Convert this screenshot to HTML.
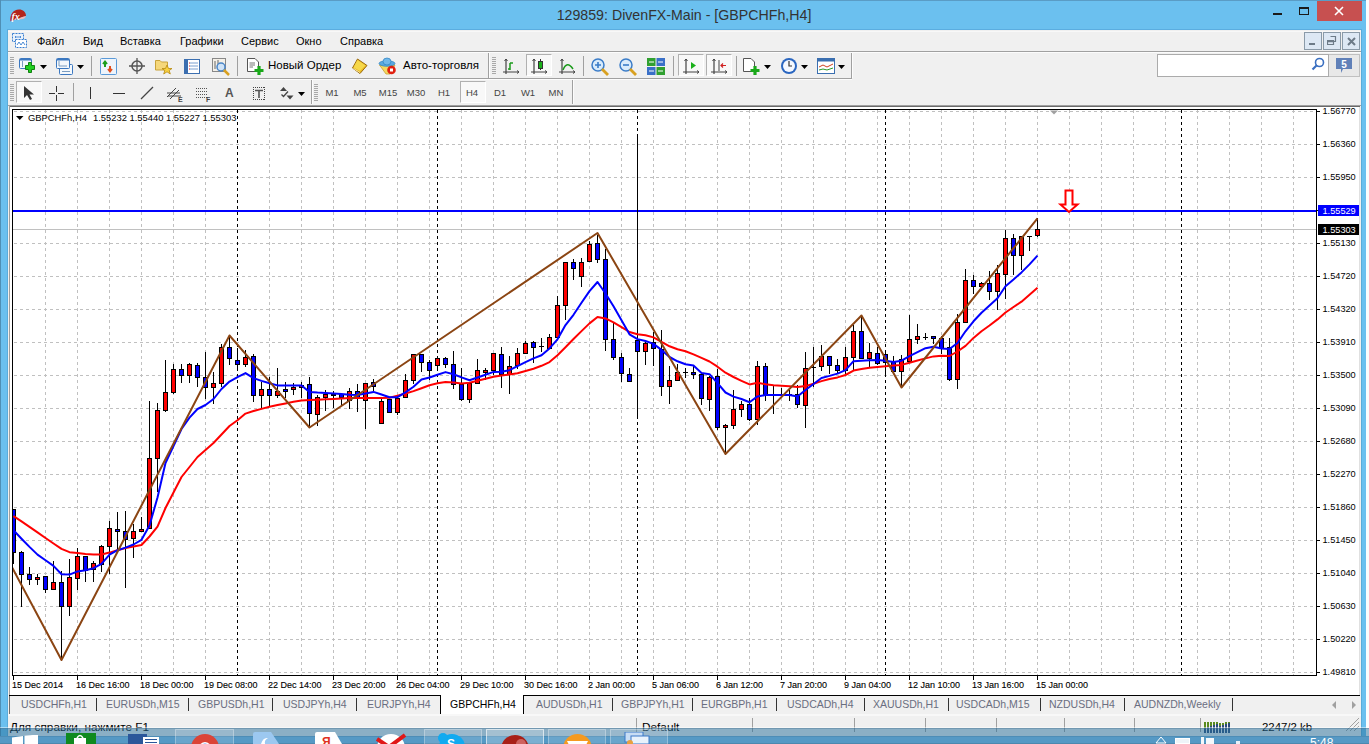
<!DOCTYPE html>
<html><head><meta charset="utf-8">
<style>
*{margin:0;padding:0;box-sizing:border-box}
html,body{width:1369px;height:744px;overflow:hidden;background:#fdfdfd;font-family:"Liberation Sans",sans-serif}
.abs{position:absolute}
.r{position:absolute}
.t{position:absolute;white-space:nowrap;line-height:1}
</style></head><body>
<!-- window frame -->
<div class="r" style="left:0;top:0;width:1366px;height:744px;background:#6bc0ef"></div>
<div class="r" style="left:0;top:0;width:1366px;height:1px;background:#5a9cc5"></div>
<div class="r" style="left:0;top:0;width:1px;height:744px;background:#4f8fb5"></div>
<div class="r" style="left:7px;top:29px;width:1355px;height:1px;background:#5badE0"></div>
<div class="r" style="left:7px;top:30px;width:1px;height:714px;background:#5aacdb"></div>
<div class="r" style="left:1361px;top:30px;width:1px;height:714px;background:#5aacdb"></div>
<!-- title -->
<svg class="abs" style="left:9px;top:8px" width="18" height="15" viewBox="0 0 18 15">
<path d="M1.5 13.5 C0.5 7 4 1.5 10 1.5 C14 1.5 17 4 17 8 C15 8.5 12 9 9.5 11 C6.5 11.5 3.5 12.5 1.5 13.5Z" fill="#b3241c"/>
<path d="M9.5 11 C12 9 15 8.5 17 8 C16.5 10.5 13 12 9.5 11Z" fill="#f2b8b8"/>
<text x="2.5" y="11.5" font-family="Liberation Serif" font-style="italic" font-weight="bold" font-size="10" fill="#fff">fx</text>
</svg>
<div class="t" style="left:484px;top:8px;width:400px;text-align:center;font-size:14.2px;color:#333">129859: DivenFX-Main - [GBPCHFh,H4]</div>
<div class="r" style="left:1273px;top:13px;width:9px;height:2px;background:#1a1a1a"></div>
<div class="r" style="left:1299px;top:7px;width:10px;height:8px;border:1px solid #1a1a1a;border-top-width:2px"></div>
<div class="r" style="left:1317px;top:1px;width:45px;height:20px;background:#c75050"></div>
<svg class="abs" style="left:1334px;top:6px" width="10" height="10"><path d="M1 1L9 9M9 1L1 9" stroke="#fff" stroke-width="1.6"/></svg>
<!-- client -->
<div class="r" style="left:8px;top:30px;width:1353px;height:714px;background:#f0f0f0"></div>
<div class="r" style="left:8px;top:31px;width:1353px;height:1px;background:#f8f8f8"></div>
<!-- menu bar -->
<svg class="abs" style="left:12px;top:33px" width="16" height="15" viewBox="0 0 16 15">
<rect x="0.5" y="0.5" width="11" height="8" fill="#eaf2fb" stroke="#3a7fd0" stroke-dasharray="2,1"/>
<path d="M3 4H9M4 3L3 4L4 5M8 3L9 4L8 5" stroke="#3a7fd0" fill="none" stroke-width="0.8"/>
<rect x="3.5" y="6.5" width="11" height="8" fill="#fff" stroke="#3a7fd0" stroke-dasharray="2,1"/>
<path d="M5 12l2-3 2 3 2-3 2 3" stroke="#3a7fd0" fill="none" stroke-width="0.9"/>
</svg>
<div class="t" style="left:37px;top:36px;font-size:11px;color:#000">Файл</div>
<div class="t" style="left:83px;top:36px;font-size:11px;color:#000">Вид</div>
<div class="t" style="left:120px;top:36px;font-size:11px;color:#000">Вставка</div>
<div class="t" style="left:180px;top:36px;font-size:11px;color:#000">Графики</div>
<div class="t" style="left:241px;top:36px;font-size:11px;color:#000">Сервис</div>
<div class="t" style="left:296px;top:36px;font-size:11px;color:#000">Окно</div>
<div class="t" style="left:340px;top:36px;font-size:11px;color:#000">Справка</div>
<!-- MDI buttons -->
<div class="r" style="left:1304px;top:32px;width:18px;height:18px;background:#dde8f4;border:1px solid #8a9aa8"></div>
<div class="r" style="left:1323px;top:32px;width:18px;height:18px;background:#dde8f4;border:1px solid #8a9aa8"></div>
<div class="r" style="left:1342px;top:32px;width:18px;height:18px;background:#dde8f4;border:1px solid #8a9aa8"></div>
<div class="r" style="left:1309px;top:43px;width:6px;height:2px;background:#6d7b88"></div>
<svg class="abs" style="left:1327px;top:36px" width="10" height="10"><path d="M3.5 0.5H8.5V5.5H7M0.5 4.5H6.5V8.5H0.5Z" fill="none" stroke="#6d7b88" stroke-width="1.2"/><path d="M0.5 5.5H6.5" stroke="#6d7b88" stroke-width="1.5"/></svg>
<svg class="abs" style="left:1347px;top:37px" width="9" height="9"><path d="M1 1L8 8M8 1L1 8" stroke="#6d7b88" stroke-width="2"/></svg>
<div class="r" style="left:8px;top:51px;width:1353px;height:1px;background:#a0a0a0"></div>
<div class="r" style="left:8px;top:52px;width:1353px;height:1px;background:#fcfcfc"></div>
<div class="r" style="left:8px;top:78px;width:844px;height:1px;background:#a0a0a0"></div><div class="r" style="left:8px;top:79px;width:844px;height:1px;background:#fcfcfc"></div><div class="r" style="left:488px;top:53px;width:1px;height:25px;background:#a0a0a0"></div><div class="r" style="left:489px;top:53px;width:1px;height:25px;background:#fcfcfc"></div><div class="r" style="left:851px;top:53px;width:1px;height:25px;background:#a0a0a0"></div><div class="r" style="left:852px;top:53px;width:1px;height:25px;background:#fcfcfc"></div><div class="r" style="left:311px;top:80px;width:1px;height:24px;background:#a0a0a0"></div><div class="r" style="left:312px;top:80px;width:1px;height:24px;background:#fcfcfc"></div><div class="r" style="left:572px;top:80px;width:1px;height:24px;background:#a0a0a0"></div><div class="r" style="left:573px;top:80px;width:1px;height:24px;background:#fcfcfc"></div><svg class="abs" style="left:10px;top:56px" width="4" height="20"><path d="M0 1.5H4M0 3.5H4M0 5.5H4M0 7.5H4M0 9.5H4M0 11.5H4M0 13.5H4M0 15.5H4M0 17.5H4" stroke="#a8a8a8" stroke-width="1"/></svg><svg class="abs" style="left:492px;top:56px" width="4" height="20"><path d="M0 1.5H4M0 3.5H4M0 5.5H4M0 7.5H4M0 9.5H4M0 11.5H4M0 13.5H4M0 15.5H4M0 17.5H4" stroke="#a8a8a8" stroke-width="1"/></svg><svg class="abs" style="left:10px;top:83px" width="4" height="20"><path d="M0 1.5H4M0 3.5H4M0 5.5H4M0 7.5H4M0 9.5H4M0 11.5H4M0 13.5H4M0 15.5H4M0 17.5H4" stroke="#a8a8a8" stroke-width="1"/></svg><svg class="abs" style="left:314px;top:83px" width="4" height="20"><path d="M0 1.5H4M0 3.5H4M0 5.5H4M0 7.5H4M0 9.5H4M0 11.5H4M0 13.5H4M0 15.5H4M0 17.5H4" stroke="#a8a8a8" stroke-width="1"/></svg><div class="r" style="left:91px;top:56px;width:1px;height:20px;background:#a0a0a0"></div><div class="r" style="left:237px;top:56px;width:1px;height:20px;background:#a0a0a0"></div><div class="r" style="left:583px;top:56px;width:1px;height:20px;background:#a0a0a0"></div><div class="r" style="left:673px;top:56px;width:1px;height:20px;background:#a0a0a0"></div><div class="r" style="left:736px;top:56px;width:1px;height:20px;background:#a0a0a0"></div><div class="r" style="left:73px;top:83px;width:1px;height:18px;background:#a0a0a0"></div><div class="r" style="left:526px;top:54px;width:26px;height:22px;background:#f8f8f8;border-left:1px solid #b0b0b0;border-top:1px solid #b0b0b0;border-right:1px solid #fff;border-bottom:1px solid #fff"></div><div class="r" style="left:678px;top:54px;width:26px;height:22px;background:#f8f8f8;border-left:1px solid #b0b0b0;border-top:1px solid #b0b0b0;border-right:1px solid #fff;border-bottom:1px solid #fff"></div><div class="r" style="left:706px;top:54px;width:26px;height:22px;background:#f8f8f8;border-left:1px solid #b0b0b0;border-top:1px solid #b0b0b0;border-right:1px solid #fff;border-bottom:1px solid #fff"></div><div class="r" style="left:16px;top:81px;width:26px;height:22px;background:#f8f8f8;border-left:1px solid #b0b0b0;border-top:1px solid #b0b0b0;border-right:1px solid #fff;border-bottom:1px solid #fff"></div><div class="r" style="left:460px;top:81px;width:26px;height:22px;background:#f8f8f8;border-left:1px solid #b0b0b0;border-top:1px solid #b0b0b0;border-right:1px solid #fff;border-bottom:1px solid #fff"></div><div class="t" style="left:268px;top:60px;font-size:11.5px;color:#000;">Новый Ордер</div><div class="t" style="left:403px;top:60px;font-size:11.5px;color:#000;">Авто-торговля</div><svg class="abs" style="left:19px;top:57px" width="18" height="18"><rect x="0.5" y="1.5" width="12" height="10" rx="1" fill="#f4f8fc" stroke="#3c78c0"/><rect x="1" y="2" width="11" height="1.5" fill="#3c78c0"/><path d="M3.5 4V10" stroke="#7a9cc0"/><path d="M9.5 5.5H12.5V8.5H15.5V12.5H12.5V15.5H9.5V12.5H6.5V8.5H9.5Z" fill="#20d020" stroke="#108010" stroke-width="1"/></svg><svg class="abs" style="left:40px;top:65px" width="7" height="4"><path d="M0 0H7L3.5 4Z" fill="#000"/></svg><svg class="abs" style="left:56px;top:57px" width="18" height="18"><rect x="3.5" y="7.5" width="13" height="10" rx="1" fill="#f4f8fc" stroke="#3c78c0"/><rect x="0.5" y="1.5" width="13" height="10" rx="1" fill="#f4f8fc" stroke="#3c78c0"/><rect x="1" y="2" width="12" height="1.5" fill="#3c78c0"/><path d="M3 4V9M3 9H11M6 14.5H14" stroke="#7a9cc0"/></svg><svg class="abs" style="left:77px;top:65px" width="7" height="4"><path d="M0 0H7L3.5 4Z" fill="#000"/></svg><svg class="abs" style="left:100px;top:58px" width="17" height="17"><rect x="0.5" y="0.5" width="16" height="16" rx="1" fill="#eef4fb" stroke="#5b9ad8"/><path d="M5 9V4M3 6L5 3.5L7 6" stroke="#1c9e1c" stroke-width="2" fill="none"/><path d="M10 8V13M8 11L10 13.5L12 11" stroke="#e05020" stroke-width="2" fill="none"/></svg><svg class="abs" style="left:129px;top:58px" width="16" height="16"><circle cx="8" cy="8" r="5" fill="none" stroke="#555" stroke-width="1.5"/><path d="M8 0V16M0 8H16" stroke="#555" stroke-width="1.3"/></svg><svg class="abs" style="left:155px;top:58px" width="18" height="18"><path d="M0.5 2.5H5L6.5 4H12.5V12H0.5Z" fill="#f5d77a" stroke="#c9a33a"/><path d="M12 7L13.5 10.5H17L14.2 12.5L15.3 16L12 13.8L8.7 16L9.8 12.5L7 10.5H10.5Z" fill="#f8d040" stroke="#b88a10" stroke-width="0.8"/></svg><svg class="abs" style="left:184px;top:58px" width="17" height="17"><rect x="0.5" y="1.5" width="15" height="14" fill="#fff" stroke="#3c6fb0"/><rect x="1" y="2" width="3" height="13" fill="#3c6fb0"/><path d="M6 5H14M6 8H14M6 11H14" stroke="#7aa0d0"/><path d="M5 5H6M5 8H6M5 11H6" stroke="#d02020"/></svg><svg class="abs" style="left:212px;top:58px" width="18" height="18"><rect x="0.5" y="0.5" width="13" height="13" fill="#f4f0e8" stroke="#888"/><path d="M3 3V11M6 2V9" stroke="#666"/><circle cx="9" cy="9" r="4" fill="#cfe3f7" stroke="#4a86c8" stroke-width="1.5"/><path d="M12 12L17 17" stroke="#d8a020" stroke-width="2.5"/></svg><svg class="abs" style="left:247px;top:58px" width="18" height="18"><path d="M0.5 0.5H8L11.5 4V13.5H0.5Z" fill="#fff" stroke="#555"/><path d="M2.5 5H8M2.5 7H8M2.5 9H6" stroke="#777"/><path d="M12 8V17M7.5 12.5H16.5" stroke="#19a819" stroke-width="3.2"/></svg><svg class="abs" style="left:351px;top:58px" width="18" height="17"><path d="M6.5 1L16 7.5L9 15.5L1.5 10Z" fill="#e9b820" stroke="#9a6a10" stroke-width="1"/><path d="M6.5 2L14.5 7.5L9 13L2.5 9.5Z" fill="#f6d84a"/><path d="M2.5 10.5L9 14.5" stroke="#f8e8a0" stroke-width="1"/></svg><svg class="abs" style="left:378px;top:57px" width="19" height="19"><path d="M1.5 8L17 8L12 17H8Z" fill="#f4d860" stroke="#c8a030" stroke-width="0.8"/><ellipse cx="9" cy="6.5" rx="8" ry="2.8" fill="#58a8e0" stroke="#2a80c0" stroke-width="0.7"/><ellipse cx="9" cy="4.5" rx="4" ry="3.5" fill="#70b8ea" stroke="#2a80c0" stroke-width="0.7"/><circle cx="13.5" cy="13" r="4.3" fill="#e02010"/><rect x="12" y="11.5" width="3" height="3" fill="#fff"/></svg><svg class="abs" style="left:502px;top:58px" width="18" height="17"><path d="M4 1V16M1 14H17" stroke="#444" stroke-width="1.2"/><path d="M2.5 3L4 1L5.5 3M15 12.5L17 14L15 15.5" stroke="#444" fill="none"/><path d="M8 12V5M8 5H11M8 11H6" stroke="#1a9a1a" stroke-width="1.5" fill="none"/></svg><svg class="abs" style="left:530px;top:58px" width="18" height="17"><path d="M4 1V16M1 14H17" stroke="#444" stroke-width="1.2"/><path d="M2.5 3L4 1L5.5 3M15 12.5L17 14L15 15.5" stroke="#444" fill="none"/><rect x="8.5" y="3.5" width="4" height="7" fill="#1ab01a" stroke="#333"/><path d="M10.5 1V3.5M10.5 10.5V12" stroke="#333"/></svg><svg class="abs" style="left:558px;top:58px" width="18" height="17"><path d="M4 1V16M1 14H17" stroke="#444" stroke-width="1.2"/><path d="M2.5 3L4 1L5.5 3M15 12.5L17 14L15 15.5" stroke="#444" fill="none"/><path d="M5 12Q9 2 15 11" stroke="#1a9a1a" stroke-width="1.5" fill="none"/></svg><svg class="abs" style="left:591px;top:58px" width="18" height="18"><circle cx="7" cy="7" r="6" fill="#d8ebfb" stroke="#3a7cc8" stroke-width="1.5"/><path d="M4 7H10M7 4V10" stroke="#3a7cc8" stroke-width="1.6"/><path d="M11 11L17 17" stroke="#d8a020" stroke-width="2.8"/></svg><svg class="abs" style="left:619px;top:58px" width="18" height="18"><circle cx="7" cy="7" r="6" fill="#d8ebfb" stroke="#3a7cc8" stroke-width="1.5"/><path d="M4 7H10" stroke="#3a7cc8" stroke-width="1.6"/><path d="M11 11L17 17" stroke="#d8a020" stroke-width="2.8"/></svg><svg class="abs" style="left:647px;top:58px" width="18" height="17"><rect x="0" y="0" width="8.5" height="8" fill="#30a030"/><rect x="9.5" y="0" width="8.5" height="8" fill="#3a70c8"/><rect x="0" y="9" width="8.5" height="8" fill="#3a70c8"/><rect x="9.5" y="9" width="8.5" height="8" fill="#30a030"/><path d="M2 4H7M11 4H16M2 13H7M11 13H16" stroke="#fff"/></svg><svg class="abs" style="left:682px;top:58px" width="18" height="17"><path d="M4 1V16M1 14H17" stroke="#444" stroke-width="1.2"/><path d="M2.5 3L4 1L5.5 3M15 12.5L17 14L15 15.5" stroke="#444" fill="none"/><path d="M9 4V11L14 7.5Z" fill="#1ab01a"/></svg><svg class="abs" style="left:710px;top:58px" width="18" height="17"><path d="M4 1V16M1 14H17" stroke="#444" stroke-width="1.2"/><path d="M2.5 3L4 1L5.5 3M15 12.5L17 14L15 15.5" stroke="#444" fill="none"/><path d="M9 2V13" stroke="#444"/><path d="M16 7.5H11M13 5.5L11 7.5L13 9.5" stroke="#d02020" fill="none" stroke-width="1.2"/></svg><svg class="abs" style="left:743px;top:58px" width="18" height="18"><path d="M0.5 0.5H8L11.5 4V13.5H0.5Z" fill="#fff" stroke="#555"/><path d="M12 8V17M7.5 12.5H16.5" stroke="#19a819" stroke-width="3.2"/></svg><svg class="abs" style="left:764px;top:65px" width="7" height="4"><path d="M0 0H7L3.5 4Z" fill="#000"/></svg><svg class="abs" style="left:780px;top:57px" width="18" height="18"><circle cx="9" cy="9" r="8" fill="#2a66c0"/><circle cx="9" cy="9" r="6" fill="#f4f8ff"/><path d="M9 4V9H12" stroke="#333" stroke-width="1.2" fill="none"/></svg><svg class="abs" style="left:801px;top:65px" width="7" height="4"><path d="M0 0H7L3.5 4Z" fill="#000"/></svg><svg class="abs" style="left:817px;top:58px" width="18" height="16"><rect x="0.5" y="0.5" width="17" height="15" fill="#fff" stroke="#3a6fb0"/><rect x="0.5" y="0.5" width="17" height="3" fill="#3a6fb0"/><path d="M2 9L6 7L10 9L16 6" stroke="#d04020" fill="none"/><path d="M2 12L6 11L10 12L16 10" stroke="#2a9a2a" fill="none"/></svg><svg class="abs" style="left:838px;top:65px" width="7" height="4"><path d="M0 0H7L3.5 4Z" fill="#000"/></svg><svg class="abs" style="left:23px;top:85px" width="12" height="16"><path d="M1 1L1 13L4 10L7 15L9 14L6.5 9.5H11Z" fill="#333"/></svg><svg class="abs" style="left:48px;top:85px" width="16" height="16"><path d="M8.5 1V7M8.5 10V16M1 8.5H7M10 8.5H16" stroke="#333"/></svg><div class="r" style="left:90px;top:87px;width:1px;height:12px;background:#333"></div><div class="r" style="left:113px;top:93px;width:12px;height:1px;background:#333"></div><svg class="abs" style="left:140px;top:86px" width="14" height="14"><path d="M1 13L13 1" stroke="#444" stroke-width="1.2"/></svg><svg class="abs" style="left:166px;top:85px" width="18" height="18"><path d="M1 12L10 3M4 14L13 5M1 8H14M2 11H15" stroke="#444" stroke-width="1"/><text x="12" y="17" font-size="7" font-weight="bold" fill="#444">E</text></svg><svg class="abs" style="left:195px;top:85px" width="18" height="18"><path d="M1 3.5H13M1 6.5H13M1 9.5H13M1 12.5H13" stroke="#555" stroke-dasharray="1,1"/><text x="11" y="17" font-size="7" font-weight="bold" fill="#444">F</text></svg><div class="t" style="left:225px;top:87px;font-size:12px;font-weight:bold;color:#555">A</div><svg class="abs" style="left:252px;top:86px" width="14" height="15"><path d="M1 1.5H13M1 13.5H13M1.5 1V14M12.5 1V14" stroke="#444" stroke-width="1" stroke-dasharray="1,1"/><path d="M3 4.5H11M7 4.5V12" stroke="#555" stroke-width="1.6"/></svg><svg class="abs" style="left:279px;top:86px" width="16" height="15"><path d="M1 5L4.5 1L8 5Z" fill="#444"/><path d="M2.5 8.5L4.5 10.5L9 5.5" stroke="#444" stroke-width="1.3" fill="none"/><path d="M7.5 9.5H14.5L11 13.5Z" fill="#444"/></svg><svg class="abs" style="left:298px;top:92px" width="7" height="4"><path d="M0 0H7L3.5 4Z" fill="#000"/></svg><div class="t" style="left:312px;top:88px;width:40px;text-align:center;font-size:9.5px;color:#444">M1</div><div class="t" style="left:340px;top:88px;width:40px;text-align:center;font-size:9.5px;color:#444">M5</div><div class="t" style="left:368px;top:88px;width:40px;text-align:center;font-size:9.5px;color:#444">M15</div><div class="t" style="left:396px;top:88px;width:40px;text-align:center;font-size:9.5px;color:#444">M30</div><div class="t" style="left:424px;top:88px;width:40px;text-align:center;font-size:9.5px;color:#444">H1</div><div class="t" style="left:452px;top:88px;width:40px;text-align:center;font-size:9.5px;color:#444">H4</div><div class="t" style="left:480px;top:88px;width:40px;text-align:center;font-size:9.5px;color:#444">D1</div><div class="t" style="left:508px;top:88px;width:40px;text-align:center;font-size:9.5px;color:#444">W1</div><div class="t" style="left:536px;top:88px;width:40px;text-align:center;font-size:9.5px;color:#444">MN</div><div class="r" style="left:1157px;top:54px;width:172px;height:23px;background:#fff;border:1px solid #ababab"></div><svg class="abs" style="left:1311px;top:57px" width="14" height="14"><circle cx="8.5" cy="5.5" r="4" fill="none" stroke="#3a6fc0" stroke-width="1.6"/><path d="M6 8L1.5 12.5" stroke="#3a6fc0" stroke-width="2.2"/></svg><div class="r" style="left:1329px;top:54px;width:31px;height:23px;background:#e8e8e8;border:1px solid #c0c0c0;border-left:none"></div><svg class="abs" style="left:1335px;top:58px" width="18" height="17"><path d="M1 0H17V11H8L6 15V11H1Z" fill="#6080b8"/><text x="9" y="10" font-size="10" font-weight="bold" fill="#fff" text-anchor="middle">5</text></svg>
<!-- MDI area border -->
<div class="r" style="left:8px;top:105px;width:1353px;height:1px;background:#a0a0a0"></div>
<div class="r" style="left:9px;top:106px;width:1351px;height:1px;background:#696969"></div>
<div class="r" style="left:9px;top:106px;width:1px;height:589px;background:#a0a0a0"></div>
<div class="r" style="left:10px;top:107px;width:1349px;height:588px;background:#fff"></div>
<div class="r" style="left:1359px;top:107px;width:1px;height:588px;background:#e0e0e0"></div>
<svg class="abs" style="left:0;top:0" width="1369" height="744" font-family="Liberation Sans, sans-serif"><defs><clipPath id="cc"><rect x="13" y="110" width="1303" height="565"/></clipPath></defs><path d="M45.5 110V675M77.5 110V675M109.5 110V675M141.5 110V675M173.5 110V675M205.5 110V675M237.5 110V675M269.5 110V675M301.5 110V675M333.5 110V675M365.5 110V675M397.5 110V675M429.5 110V675M461.5 110V675M493.5 110V675M525.5 110V675M557.5 110V675M589.5 110V675M621.5 110V675M653.5 110V675M685.5 110V675M717.5 110V675M749.5 110V675M781.5 110V675M813.5 110V675M845.5 110V675M877.5 110V675M909.5 110V675M941.5 110V675M973.5 110V675M1005.5 110V675M1037.5 110V675M1069.5 110V675M1101.5 110V675M1133.5 110V675M1165.5 110V675M1197.5 110V675M1229.5 110V675M1261.5 110V675M1293.5 110V675" stroke="#c0c0c0" stroke-width="1" stroke-dasharray="3,3" fill="none"/><path d="M13 111.5H1316M13 144.5H1316M13 177.5H1316M13 210.5H1316M13 243.5H1316M13 276.5H1316M13 309.5H1316M13 342.5H1316M13 375.5H1316M13 408.5H1316M13 441.5H1316M13 474.5H1316M13 507.5H1316M13 540.5H1316M13 573.5H1316M13 606.5H1316M13 639.5H1316M13 672.5H1316" stroke="#c0c0c0" stroke-width="1" stroke-dasharray="3,3" stroke-dashoffset="-1" fill="none"/><path d="M237.5 110V675M437.5 110V675M637.5 110V675M885.5 110V675M1181.5 110V675" stroke="#000" stroke-width="1" stroke-dasharray="3,3" fill="none"/><rect x="13" y="210" width="1303" height="2" fill="#0000ff"/><rect x="13" y="229" width="1303" height="1" fill="#c0c0c0"/><rect x="637" y="136" width="1" height="281" fill="#000"/><g clip-path="url(#cc)"><path d="M13.5 509V564M21.5 551V607M29.5 567V585M37.5 574V585M45.5 576V593M53.5 561V590M61.5 571V661M69.5 559V616M77.5 548V590M85.5 556V582M93.5 561V582M101.5 545V572M109.5 521V574M117.5 512V551M125.5 511V588M133.5 524V558M141.5 517V532M149.5 401V529M157.5 403V492M165.5 360V412M173.5 364V394M181.5 364V383M189.5 363V383M197.5 363V387M205.5 352V399M213.5 372V404M221.5 344V387M229.5 336V365M237.5 348V369M245.5 350V367M253.5 354V402M261.5 382V409M269.5 377V406M277.5 368V398M285.5 382V398M293.5 383V395M301.5 382V398M309.5 377V427M317.5 395V426M325.5 390V411M333.5 391V408M341.5 393V406M349.5 388V409M357.5 384V412M365.5 383V429M373.5 379V393M381.5 398V424M389.5 399V413M397.5 395V415M405.5 374V398M413.5 354V384M421.5 354V372M429.5 360V380M437.5 356V371M445.5 357V368M453.5 351V389M461.5 368V401M469.5 383V403M477.5 359V384M485.5 368V380M493.5 353V375M501.5 347V388M509.5 356V394M517.5 348V369M525.5 341V354M533.5 341V363M541.5 338V352M549.5 334V349M557.5 296V340M565.5 262V320M573.5 259V280M581.5 258V287M589.5 241V262M597.5 235V263M605.5 249V351M613.5 323V360M621.5 353V382M629.5 368V382M637.5 338V353M645.5 340V365M653.5 332V366M661.5 330V396M669.5 366V404M677.5 364V381M685.5 368V378M693.5 365V379M701.5 374V405M709.5 376V411M717.5 369V430M725.5 424V455M733.5 390V429M741.5 401V417M749.5 398V421M757.5 361V425M765.5 363V401M773.5 386V414M781.5 388V398M789.5 390V401M797.5 385V408M805.5 352V428M813.5 347V387M821.5 345V371M829.5 356V374M837.5 359V373M845.5 347V375M853.5 325V371M861.5 316V359M869.5 343V368M877.5 347V365M885.5 350V375M893.5 356V372M901.5 355V388M909.5 315V362M917.5 324V344M925.5 333V340M933.5 336V344M941.5 336V354M949.5 338V381M957.5 314V389M965.5 269V323M973.5 275V294M981.5 282V287M989.5 271V300M997.5 265V310M1005.5 230V299M1013.5 234V275M1021.5 236V270M1029.5 236V251M1037.5 218V237" stroke="#000" stroke-width="1" fill="none"/><rect x="11.5" y="509.5" width="4" height="43" fill="#0000ff" stroke="#000" stroke-width="1"/><rect x="19.5" y="552.5" width="4" height="22" fill="#0000ff" stroke="#000" stroke-width="1"/><rect x="27.5" y="574.5" width="4" height="5" fill="#0000ff" stroke="#000" stroke-width="1"/><rect x="35.5" y="577.5" width="4" height="2" fill="#ff0000" stroke="#000" stroke-width="1"/><rect x="43.5" y="576.5" width="4" height="13" fill="#0000ff" stroke="#000" stroke-width="1"/><rect x="51.5" y="582.5" width="4" height="7" fill="#ff0000" stroke="#000" stroke-width="1"/><rect x="59.5" y="582.5" width="4" height="24" fill="#0000ff" stroke="#000" stroke-width="1"/><rect x="67.5" y="577.5" width="4" height="29" fill="#ff0000" stroke="#000" stroke-width="1"/><rect x="75.5" y="556.5" width="4" height="22" fill="#ff0000" stroke="#000" stroke-width="1"/><rect x="83.5" y="556.5" width="4" height="14" fill="#0000ff" stroke="#000" stroke-width="1"/><rect x="91.5" y="563.5" width="4" height="6" fill="#ff0000" stroke="#000" stroke-width="1"/><rect x="99.5" y="546.5" width="4" height="18" fill="#ff0000" stroke="#000" stroke-width="1"/><rect x="107.5" y="528.5" width="4" height="18" fill="#ff0000" stroke="#000" stroke-width="1"/><rect x="115.5" y="529.5" width="4" height="2" fill="#0000ff" stroke="#000" stroke-width="1"/><rect x="123.5" y="531.5" width="4" height="8" fill="#0000ff" stroke="#000" stroke-width="1"/><rect x="131.5" y="531.5" width="4" height="7" fill="#ff0000" stroke="#000" stroke-width="1"/><rect x="139.5" y="529.5" width="4" height="2" fill="#ff0000" stroke="#000" stroke-width="1"/><rect x="147.5" y="458.5" width="4" height="70" fill="#ff0000" stroke="#000" stroke-width="1"/><rect x="155.5" y="410.5" width="4" height="48" fill="#ff0000" stroke="#000" stroke-width="1"/><rect x="163.5" y="392.5" width="4" height="18" fill="#ff0000" stroke="#000" stroke-width="1"/><rect x="171.5" y="369.5" width="4" height="23" fill="#ff0000" stroke="#000" stroke-width="1"/><rect x="179.5" y="369.5" width="4" height="6" fill="#0000ff" stroke="#000" stroke-width="1"/><rect x="187.5" y="364.5" width="4" height="11" fill="#ff0000" stroke="#000" stroke-width="1"/><rect x="195.5" y="365.5" width="4" height="12" fill="#0000ff" stroke="#000" stroke-width="1"/><rect x="203.5" y="377.5" width="4" height="10" fill="#0000ff" stroke="#000" stroke-width="1"/><rect x="211.5" y="383.5" width="4" height="4" fill="#ff0000" stroke="#000" stroke-width="1"/><rect x="219.5" y="347.5" width="4" height="36" fill="#ff0000" stroke="#000" stroke-width="1"/><rect x="227.5" y="347.5" width="4" height="11" fill="#0000ff" stroke="#000" stroke-width="1"/><rect x="235.5" y="360.5" width="4" height="4" fill="#0000ff" stroke="#000" stroke-width="1"/><rect x="243.5" y="357.5" width="4" height="7" fill="#ff0000" stroke="#000" stroke-width="1"/><rect x="251.5" y="356.5" width="4" height="39" fill="#0000ff" stroke="#000" stroke-width="1"/><rect x="259.5" y="389.5" width="4" height="6" fill="#ff0000" stroke="#000" stroke-width="1"/><rect x="267.5" y="389.5" width="4" height="6" fill="#0000ff" stroke="#000" stroke-width="1"/><rect x="275.5" y="391.5" width="4" height="4" fill="#ff0000" stroke="#000" stroke-width="1"/><rect x="283.5" y="389.5" width="4" height="2" fill="#0000ff" stroke="#000" stroke-width="1"/><rect x="291.5" y="387.5" width="4" height="2" fill="#ff0000" stroke="#000" stroke-width="1"/><rect x="299.5" y="385.5" width="4" height="2" fill="#ff0000" stroke="#000" stroke-width="1"/><rect x="307.5" y="384.5" width="4" height="29" fill="#0000ff" stroke="#000" stroke-width="1"/><rect x="315.5" y="397.5" width="4" height="17" fill="#ff0000" stroke="#000" stroke-width="1"/><rect x="323.5" y="394.5" width="4" height="3" fill="#ff0000" stroke="#000" stroke-width="1"/><rect x="331.5" y="394.5" width="4" height="1" fill="#0000ff" stroke="#000" stroke-width="1"/><rect x="339.5" y="394.5" width="4" height="3" fill="#0000ff" stroke="#000" stroke-width="1"/><rect x="347.5" y="391.5" width="4" height="9" fill="#ff0000" stroke="#000" stroke-width="1"/><rect x="355.5" y="391.5" width="4" height="7" fill="#0000ff" stroke="#000" stroke-width="1"/><rect x="363.5" y="383.5" width="4" height="17" fill="#ff0000" stroke="#000" stroke-width="1"/><rect x="371.5" y="382.5" width="4" height="4" fill="#0000ff" stroke="#000" stroke-width="1"/><rect x="379.5" y="401.5" width="4" height="22" fill="#ff0000" stroke="#000" stroke-width="1"/><rect x="387.5" y="399.5" width="4" height="13" fill="#0000ff" stroke="#000" stroke-width="1"/><rect x="395.5" y="398.5" width="4" height="14" fill="#ff0000" stroke="#000" stroke-width="1"/><rect x="403.5" y="380.5" width="4" height="17" fill="#ff0000" stroke="#000" stroke-width="1"/><rect x="411.5" y="354.5" width="4" height="26" fill="#ff0000" stroke="#000" stroke-width="1"/><rect x="419.5" y="354.5" width="4" height="8" fill="#0000ff" stroke="#000" stroke-width="1"/><rect x="427.5" y="362.5" width="4" height="8" fill="#0000ff" stroke="#000" stroke-width="1"/><rect x="435.5" y="358.5" width="4" height="7" fill="#ff0000" stroke="#000" stroke-width="1"/><rect x="443.5" y="358.5" width="4" height="6" fill="#0000ff" stroke="#000" stroke-width="1"/><rect x="451.5" y="364.5" width="4" height="20" fill="#0000ff" stroke="#000" stroke-width="1"/><rect x="459.5" y="384.5" width="4" height="15" fill="#0000ff" stroke="#000" stroke-width="1"/><rect x="467.5" y="383.5" width="4" height="16" fill="#ff0000" stroke="#000" stroke-width="1"/><rect x="475.5" y="370.5" width="4" height="13" fill="#ff0000" stroke="#000" stroke-width="1"/><rect x="483.5" y="370.5" width="4" height="2" fill="#ff0000" stroke="#000" stroke-width="1"/><rect x="491.5" y="353.5" width="4" height="17" fill="#ff0000" stroke="#000" stroke-width="1"/><rect x="499.5" y="354.5" width="4" height="20" fill="#0000ff" stroke="#000" stroke-width="1"/><rect x="507.5" y="366.5" width="4" height="8" fill="#ff0000" stroke="#000" stroke-width="1"/><rect x="515.5" y="353.5" width="4" height="12" fill="#ff0000" stroke="#000" stroke-width="1"/><rect x="523.5" y="343.5" width="4" height="10" fill="#ff0000" stroke="#000" stroke-width="1"/><rect x="531.5" y="342.5" width="4" height="5" fill="#0000ff" stroke="#000" stroke-width="1"/><rect x="539" y="346" width="5" height="1" fill="#000"/><rect x="547.5" y="337.5" width="4" height="11" fill="#ff0000" stroke="#000" stroke-width="1"/><rect x="555.5" y="305.5" width="4" height="32" fill="#ff0000" stroke="#000" stroke-width="1"/><rect x="563.5" y="262.5" width="4" height="43" fill="#ff0000" stroke="#000" stroke-width="1"/><rect x="571.5" y="262.5" width="4" height="6" fill="#0000ff" stroke="#000" stroke-width="1"/><rect x="579.5" y="262.5" width="4" height="14" fill="#ff0000" stroke="#000" stroke-width="1"/><rect x="587.5" y="244.5" width="4" height="17" fill="#ff0000" stroke="#000" stroke-width="1"/><rect x="595.5" y="243.5" width="4" height="16" fill="#0000ff" stroke="#000" stroke-width="1"/><rect x="603.5" y="259.5" width="4" height="80" fill="#0000ff" stroke="#000" stroke-width="1"/><rect x="611.5" y="339.5" width="4" height="18" fill="#0000ff" stroke="#000" stroke-width="1"/><rect x="619.5" y="357.5" width="4" height="16" fill="#0000ff" stroke="#000" stroke-width="1"/><rect x="627.5" y="374.5" width="4" height="7" fill="#0000ff" stroke="#000" stroke-width="1"/><rect x="635.5" y="340.5" width="4" height="11" fill="#0000ff" stroke="#000" stroke-width="1"/><rect x="643.5" y="343.5" width="4" height="8" fill="#ff0000" stroke="#000" stroke-width="1"/><rect x="651.5" y="342.5" width="4" height="6" fill="#0000ff" stroke="#000" stroke-width="1"/><rect x="659.5" y="349.5" width="4" height="37" fill="#0000ff" stroke="#000" stroke-width="1"/><rect x="667.5" y="380.5" width="4" height="6" fill="#ff0000" stroke="#000" stroke-width="1"/><rect x="675.5" y="372.5" width="4" height="8" fill="#ff0000" stroke="#000" stroke-width="1"/><rect x="683" y="372" width="5" height="1" fill="#000"/><rect x="691.5" y="372.5" width="4" height="2" fill="#0000ff" stroke="#000" stroke-width="1"/><rect x="699.5" y="374.5" width="4" height="24" fill="#0000ff" stroke="#000" stroke-width="1"/><rect x="707.5" y="377.5" width="4" height="22" fill="#ff0000" stroke="#000" stroke-width="1"/><rect x="715.5" y="376.5" width="4" height="51" fill="#0000ff" stroke="#000" stroke-width="1"/><rect x="723.5" y="425.5" width="4" height="2" fill="#ff0000" stroke="#000" stroke-width="1"/><rect x="731.5" y="409.5" width="4" height="16" fill="#ff0000" stroke="#000" stroke-width="1"/><rect x="739.5" y="404.5" width="4" height="5" fill="#ff0000" stroke="#000" stroke-width="1"/><rect x="747.5" y="404.5" width="4" height="15" fill="#0000ff" stroke="#000" stroke-width="1"/><rect x="755.5" y="366.5" width="4" height="53" fill="#ff0000" stroke="#000" stroke-width="1"/><rect x="763.5" y="366.5" width="4" height="28" fill="#0000ff" stroke="#000" stroke-width="1"/><rect x="771" y="394" width="5" height="1" fill="#000"/><rect x="779" y="394" width="5" height="1" fill="#000"/><rect x="787" y="394" width="5" height="1" fill="#000"/><rect x="795.5" y="394.5" width="4" height="10" fill="#0000ff" stroke="#000" stroke-width="1"/><rect x="803.5" y="368.5" width="4" height="37" fill="#ff0000" stroke="#000" stroke-width="1"/><rect x="811" y="367" width="5" height="1" fill="#000"/><rect x="819.5" y="356.5" width="4" height="10" fill="#ff0000" stroke="#000" stroke-width="1"/><rect x="827.5" y="356.5" width="4" height="9" fill="#0000ff" stroke="#000" stroke-width="1"/><rect x="835.5" y="365.5" width="4" height="5" fill="#0000ff" stroke="#000" stroke-width="1"/><rect x="843.5" y="357.5" width="4" height="13" fill="#ff0000" stroke="#000" stroke-width="1"/><rect x="851.5" y="331.5" width="4" height="26" fill="#ff0000" stroke="#000" stroke-width="1"/><rect x="859.5" y="331.5" width="4" height="27" fill="#0000ff" stroke="#000" stroke-width="1"/><rect x="867.5" y="352.5" width="4" height="6" fill="#ff0000" stroke="#000" stroke-width="1"/><rect x="875.5" y="353.5" width="4" height="10" fill="#0000ff" stroke="#000" stroke-width="1"/><rect x="883.5" y="354.5" width="4" height="8" fill="#0000ff" stroke="#000" stroke-width="1"/><rect x="891.5" y="362.5" width="4" height="9" fill="#0000ff" stroke="#000" stroke-width="1"/><rect x="899.5" y="359.5" width="4" height="12" fill="#ff0000" stroke="#000" stroke-width="1"/><rect x="907.5" y="339.5" width="4" height="22" fill="#ff0000" stroke="#000" stroke-width="1"/><rect x="915.5" y="336.5" width="4" height="3" fill="#ff0000" stroke="#000" stroke-width="1"/><rect x="923" y="337" width="5" height="1" fill="#000"/><rect x="931.5" y="336.5" width="4" height="2" fill="#0000ff" stroke="#000" stroke-width="1"/><rect x="939.5" y="338.5" width="4" height="10" fill="#0000ff" stroke="#000" stroke-width="1"/><rect x="947.5" y="347.5" width="4" height="32" fill="#0000ff" stroke="#000" stroke-width="1"/><rect x="955.5" y="322.5" width="4" height="57" fill="#ff0000" stroke="#000" stroke-width="1"/><rect x="963.5" y="280.5" width="4" height="42" fill="#ff0000" stroke="#000" stroke-width="1"/><rect x="971.5" y="280.5" width="4" height="6" fill="#0000ff" stroke="#000" stroke-width="1"/><rect x="979.5" y="283.5" width="4" height="3" fill="#ff0000" stroke="#000" stroke-width="1"/><rect x="987.5" y="283.5" width="4" height="8" fill="#0000ff" stroke="#000" stroke-width="1"/><rect x="995.5" y="273.5" width="4" height="18" fill="#ff0000" stroke="#000" stroke-width="1"/><rect x="1003.5" y="238.5" width="4" height="36" fill="#ff0000" stroke="#000" stroke-width="1"/><rect x="1011.5" y="238.5" width="4" height="17" fill="#0000ff" stroke="#000" stroke-width="1"/><rect x="1019.5" y="236.5" width="4" height="19" fill="#ff0000" stroke="#000" stroke-width="1"/><rect x="1027" y="236" width="5" height="1" fill="#000"/><rect x="1035.5" y="229.5" width="4" height="6" fill="#ff0000" stroke="#000" stroke-width="1"/><polyline points="13.5,516.1 21.5,521.4 29.5,526.8 37.5,532.4 45.5,538.0 53.5,543.5 61.5,548.8 69.5,552.2 77.5,553.1 85.5,553.9 93.5,554.4 101.5,554.4 109.5,552.6 117.5,550.3 125.5,548.1 133.5,546.6 141.5,545.0 149.5,536.5 157.5,526.6 165.5,508.0 173.5,492.5 181.5,477.0 189.5,467.0 197.5,457.0 205.5,450.0 213.5,443.0 221.5,434.5 229.5,426.0 237.5,420.2 245.5,413.6 253.5,411.0 261.5,408.9 269.5,406.8 277.5,405.1 285.5,403.4 293.5,401.8 301.5,400.5 309.5,400.1 317.5,399.7 325.5,399.3 333.5,398.9 341.5,398.5 349.5,398.1 357.5,398.0 365.5,398.0 373.5,398.0 381.5,398.0 389.5,397.8 397.5,395.6 405.5,393.5 413.5,391.1 421.5,388.2 429.5,385.3 437.5,383.3 445.5,382.1 453.5,382.5 461.5,383.6 469.5,382.8 477.5,380.8 485.5,378.8 493.5,376.8 501.5,375.6 509.5,374.4 517.5,373.2 525.5,371.0 533.5,368.7 541.5,365.8 549.5,362.1 557.5,355.3 565.5,347.2 573.5,339.0 581.5,331.1 589.5,323.4 597.5,317.0 605.5,318.4 613.5,322.3 621.5,327.2 629.5,332.0 637.5,334.3 645.5,335.2 653.5,337.4 661.5,341.9 669.5,346.3 677.5,349.2 685.5,351.2 693.5,354.4 701.5,357.9 709.5,361.5 717.5,366.7 725.5,372.7 733.5,377.0 741.5,380.8 749.5,384.4 757.5,382.7 765.5,384.3 773.5,385.3 781.5,385.8 789.5,386.3 797.5,387.0 805.5,386.1 813.5,383.8 821.5,381.1 829.5,379.0 837.5,377.4 845.5,375.0 853.5,370.6 861.5,369.1 869.5,367.7 877.5,366.9 885.5,366.3 893.5,365.6 901.5,364.9 909.5,362.7 917.5,360.5 925.5,358.4 933.5,356.4 941.5,355.7 949.5,356.0 957.5,351.5 965.5,345.9 973.5,337.9 981.5,331.2 989.5,325.5 997.5,319.4 1005.5,312.5 1013.5,307.0 1021.5,301.7 1029.5,294.8 1037.5,287.8" stroke="#ff0000" stroke-width="2" fill="none" stroke-linejoin="round"/><polyline points="13.5,530.2 21.5,538.7 29.5,546.9 37.5,554.6 45.5,560.2 53.5,565.9 61.5,574.2 69.5,574.6 77.5,571.4 85.5,570.2 93.5,568.2 101.5,563.8 109.5,554.7 117.5,550.2 125.5,547.6 133.5,544.5 141.5,539.8 149.5,525.5 157.5,497.4 165.5,463.0 173.5,446.0 181.5,429.0 189.5,417.6 197.5,409.0 205.5,405.0 213.5,399.0 221.5,389.0 229.5,381.6 237.5,377.2 245.5,373.1 253.5,378.1 261.5,380.9 269.5,383.2 277.5,385.4 285.5,385.4 293.5,385.4 301.5,385.4 309.5,392.0 317.5,392.6 325.5,393.0 333.5,393.4 341.5,394.0 349.5,394.7 357.5,395.0 365.5,393.5 373.5,391.9 381.5,394.5 389.5,397.2 397.5,397.2 405.5,392.4 413.5,386.7 421.5,379.5 429.5,377.5 437.5,374.7 445.5,372.1 453.5,374.2 461.5,377.4 469.5,380.3 477.5,377.5 485.5,374.7 493.5,371.9 501.5,371.8 509.5,370.2 517.5,366.1 525.5,362.1 533.5,358.4 541.5,355.2 549.5,348.4 557.5,339.3 565.5,325.1 573.5,314.8 581.5,302.8 589.5,291.1 597.5,282.0 605.5,293.5 613.5,306.3 621.5,320.2 629.5,334.3 637.5,339.1 645.5,341.0 653.5,343.9 661.5,349.9 669.5,357.0 677.5,361.3 685.5,364.2 693.5,365.6 701.5,373.0 709.5,374.2 717.5,383.1 725.5,392.5 733.5,396.6 741.5,399.0 749.5,402.2 757.5,396.4 765.5,395.0 773.5,395.0 781.5,395.0 789.5,395.0 797.5,396.5 805.5,390.0 813.5,384.0 821.5,378.0 829.5,375.9 837.5,373.6 845.5,370.2 853.5,361.2 861.5,360.7 869.5,360.3 877.5,359.9 885.5,360.7 893.5,361.9 901.5,360.7 909.5,356.2 917.5,352.2 925.5,348.2 933.5,346.7 941.5,348.5 949.5,349.0 957.5,343.0 965.5,331.3 973.5,321.3 981.5,312.7 989.5,305.6 997.5,298.3 1005.5,286.2 1013.5,279.5 1021.5,272.4 1029.5,264.4 1037.5,255.6" stroke="#0000ff" stroke-width="2" fill="none" stroke-linejoin="round"/><polyline points="0.5,545.6 61.5,660 229.5,335.5 309.5,427.5 597.5,233 725.5,454 861.5,315.5 901.5,387.5 1037.5,218.3" stroke="#8b4513" stroke-width="2" fill="none" stroke-linejoin="round"/></g><rect x="12.5" y="109.5" width="1304" height="566" fill="none" stroke="#000" stroke-width="1"/><path d="M1050 110.5H1058L1054 114.5Z" fill="#a0a0a0"/><path d="M1065.5 190.5H1072.5V204.5H1077.5L1069 212L1060.5 204.5H1065.5Z" fill="#fff" stroke="#ff0000" stroke-width="2" stroke-linejoin="miter"/><path d="M1317 111.5H1320M1317 144.5H1320M1317 177.5H1320M1317 210.5H1320M1317 243.5H1320M1317 276.5H1320M1317 309.5H1320M1317 342.5H1320M1317 375.5H1320M1317 408.5H1320M1317 441.5H1320M1317 474.5H1320M1317 507.5H1320M1317 540.5H1320M1317 573.5H1320M1317 606.5H1320M1317 639.5H1320M1317 672.5H1320" stroke="#000" stroke-width="1"/><rect x="1318" y="205" width="41" height="11" fill="#0000ff"/><rect x="1318" y="224" width="41" height="11" fill="#000"/><g font-size="9.2" fill="#000"><text transform="translate(1322.5,114) scale(1,1.08)">1.56770</text><text transform="translate(1322.5,147) scale(1,1.08)">1.56360</text><text transform="translate(1322.5,180) scale(1,1.08)">1.55950</text><text transform="translate(1322.5,246) scale(1,1.08)">1.55130</text><text transform="translate(1322.5,279) scale(1,1.08)">1.54720</text><text transform="translate(1322.5,312) scale(1,1.08)">1.54320</text><text transform="translate(1322.5,345) scale(1,1.08)">1.53910</text><text transform="translate(1322.5,378) scale(1,1.08)">1.53500</text><text transform="translate(1322.5,411) scale(1,1.08)">1.53090</text><text transform="translate(1322.5,444) scale(1,1.08)">1.52680</text><text transform="translate(1322.5,477) scale(1,1.08)">1.52270</text><text transform="translate(1322.5,510) scale(1,1.08)">1.51860</text><text transform="translate(1322.5,543) scale(1,1.08)">1.51450</text><text transform="translate(1322.5,576) scale(1,1.08)">1.51040</text><text transform="translate(1322.5,609) scale(1,1.08)">1.50630</text><text transform="translate(1322.5,642) scale(1,1.08)">1.50220</text><text transform="translate(1322.5,675) scale(1,1.08)">1.49810</text><text transform="translate(1322.5,213.5) scale(1,1.08)" fill="#fff">1.55529</text><text transform="translate(1322.5,232.5) scale(1,1.08)" fill="#fff">1.55303</text></g><path d="M13.5 676V680M77.5 676V680M141.5 676V680M205.5 676V680M269.5 676V680M333.5 676V680M397.5 676V680M461.5 676V680M525.5 676V680M589.5 676V680M653.5 676V680M717.5 676V680M781.5 676V680M845.5 676V680M909.5 676V680M973.5 676V680M1037.5 676V680" stroke="#000" stroke-width="1"/><g font-size="9" fill="#000" stroke="#000" stroke-width="0.12" transform="translate(0,688) scale(1,1.06)"><text x="12" y="0">15 Dec 2014</text><text x="76" y="0">16 Dec 16:00</text><text x="140" y="0">18 Dec 00:00</text><text x="204" y="0">19 Dec 08:00</text><text x="268" y="0">22 Dec 14:00</text><text x="332" y="0">23 Dec 20:00</text><text x="396" y="0">26 Dec 04:00</text><text x="460" y="0">29 Dec 10:00</text><text x="524" y="0">30 Dec 16:00</text><text x="588" y="0">2 Jan 00:00</text><text x="652" y="0">5 Jan 06:00</text><text x="716" y="0">6 Jan 12:00</text><text x="780" y="0">7 Jan 20:00</text><text x="844" y="0">9 Jan 04:00</text><text x="908" y="0">12 Jan 10:00</text><text x="972" y="0">13 Jan 16:00</text><text x="1036" y="0">15 Jan 00:00</text></g><path d="M16 116H23.5L19.75 120Z" fill="#000"/><text x="28" y="121" font-size="9.4" fill="#000">GBPCHFh,H4</text><text x="93" y="121" font-size="9.4" fill="#000">1.55232 1.55440 1.55227 1.55303</text></svg>
<!-- tabs -->
<div class="r" style="left:9px;top:695px;width:1351px;height:1px;background:#000"></div>
<div class="r" style="left:9px;top:696px;width:1351px;height:18px;background:#f0f0f0"></div>
<div class="r" style="left:9px;top:696px;width:1px;height:18px;background:#707070"></div>
<div class="r" style="left:440px;top:695px;width:84px;height:20px;background:#fff;border:1px solid #000;border-top:none;border-bottom:1px solid #000"></div>
<div class="t" style="left:21px;top:699px;font-size:10.5px;color:#6a6e80;">USDCHFh,H1</div><div class="t" style="left:106px;top:699px;font-size:10.5px;color:#6a6e80;">EURUSDh,M15</div><div class="t" style="left:198px;top:699px;font-size:10.5px;color:#6a6e80;">GBPUSDh,H1</div><div class="t" style="left:283px;top:699px;font-size:10.5px;color:#6a6e80;">USDJPYh,H4</div><div class="t" style="left:367px;top:699px;font-size:10.5px;color:#6a6e80;">EURJPYh,H4</div><div class="t" style="left:450px;top:699px;font-size:10.5px;color:#000;">GBPCHFh,H4</div><div class="t" style="left:536px;top:699px;font-size:10.5px;color:#6a6e80;">AUDUSDh,H1</div><div class="t" style="left:621px;top:699px;font-size:10.5px;color:#6a6e80;">GBPJPYh,H1</div><div class="t" style="left:701px;top:699px;font-size:10.5px;color:#6a6e80;">EURGBPh,H1</div><div class="t" style="left:787px;top:699px;font-size:10.5px;color:#6a6e80;">USDCADh,H4</div><div class="t" style="left:873px;top:699px;font-size:10.5px;color:#6a6e80;">XAUUSDh,H1</div><div class="t" style="left:956px;top:699px;font-size:10.5px;color:#6a6e80;">USDCADh,M15</div><div class="t" style="left:1049px;top:699px;font-size:10.5px;color:#6a6e80;">NZDUSDh,H4</div><div class="t" style="left:1134px;top:699px;font-size:10.5px;color:#6a6e80;">AUDNZDh,Weekly</div><div class="r" style="left:96px;top:698px;width:1px;height:13px;background:#333"></div><div class="r" style="left:188px;top:698px;width:1px;height:13px;background:#333"></div><div class="r" style="left:272px;top:698px;width:1px;height:13px;background:#333"></div><div class="r" style="left:356px;top:698px;width:1px;height:13px;background:#333"></div><div class="r" style="left:612px;top:698px;width:1px;height:13px;background:#333"></div><div class="r" style="left:692px;top:698px;width:1px;height:13px;background:#333"></div><div class="r" style="left:776px;top:698px;width:1px;height:13px;background:#333"></div><div class="r" style="left:864px;top:698px;width:1px;height:13px;background:#333"></div><div class="r" style="left:948px;top:698px;width:1px;height:13px;background:#333"></div><div class="r" style="left:1040px;top:698px;width:1px;height:13px;background:#333"></div><div class="r" style="left:1124px;top:698px;width:1px;height:13px;background:#333"></div><div class="r" style="left:1232px;top:698px;width:1px;height:13px;background:#333"></div><svg class="abs" style="left:1330px;top:700px" width="28" height="10"><path d="M6 1L2 5L6 9Z M22 1L26 5L22 9Z" fill="#a0a0a0"/></svg>
<div class="r" style="left:8px;top:714px;width:1353px;height:2px;background:#f8f8f8"></div>
<div class="t" style="left:10px;top:722px;font-size:11.8px;color:#000;">Для справки, нажмите F1</div><div class="t" style="left:642px;top:722px;font-size:11.8px;color:#000;">Default</div><div class="r" style="left:636px;top:718px;width:1px;height:14px;background:#a0a0a0"></div><div class="r" style="left:752px;top:718px;width:1px;height:14px;background:#a0a0a0"></div><div class="r" style="left:854px;top:718px;width:1px;height:14px;background:#a0a0a0"></div><div class="r" style="left:925px;top:718px;width:1px;height:14px;background:#a0a0a0"></div><div class="r" style="left:996px;top:718px;width:1px;height:14px;background:#a0a0a0"></div><div class="r" style="left:1064px;top:718px;width:1px;height:14px;background:#a0a0a0"></div><div class="r" style="left:1134px;top:718px;width:1px;height:14px;background:#a0a0a0"></div><div class="r" style="left:1200px;top:718px;width:1px;height:14px;background:#a0a0a0"></div><svg class="abs" style="left:1204px;top:720px" width="26" height="14"><path d="M1 2V13M4 2V13M7 2V13M10 2V13M13 2V13M16 3V13M19 3V13M22 2V13M25 2V13" stroke="#5a8a20" stroke-width="2"/><path d="M1 8V13M4 7V13M7 6V13M10 5V13M13 4V13M16 6V13M19 5V13M22 4V13M25 3V13" stroke="#2a4a7a" stroke-width="2" stroke-dasharray="0"/></svg><div class="t" style="left:1262px;top:722px;font-size:11.4px;color:#000;">2247/2 kb</div><svg class="abs" style="left:1344px;top:716px" width="16" height="16"><path d="M15 2L2 15M15 6L6 15M15 10L10 15" stroke="#a0a0a0"/></svg>
<div class="r" style="left:0;top:727px;width:1369px;height:1px;background:rgba(255,255,255,0.45)"></div><div class="r" style="left:0;top:728px;width:1369px;height:1px;background:rgba(60,114,149,0.7)"></div><div class="r" style="left:0;top:729px;width:1369px;height:7px;background:rgba(38,110,154,0.5)"></div><div class="r" style="left:0;top:736px;width:1369px;height:8px;background:#5599c5"></div><div class="r" style="left:0;top:736px;width:1369px;height:1px;background:#4d8db7"></div><div class="r" style="left:0;top:743px;width:1369px;height:1px;background:#4c88ae"></div><div class="r" style="left:175px;top:729px;width:59px;height:16px;background:rgba(255,255,255,0.12);border:1px solid rgba(255,255,255,0.3);border-bottom:none"></div><div class="r" style="left:424px;top:729px;width:58px;height:16px;background:rgba(255,255,255,0.12);border:1px solid rgba(255,255,255,0.3);border-bottom:none"></div><div class="r" style="left:486px;top:729px;width:58px;height:16px;background:rgba(255,255,255,0.22);border:1px solid rgba(255,255,255,0.6);border-bottom:none"></div><div class="r" style="left:548px;top:729px;width:58px;height:16px;background:rgba(255,255,255,0.12);border:1px solid rgba(255,255,255,0.3);border-bottom:none"></div><div class="r" style="left:610px;top:729px;width:58px;height:16px;background:rgba(255,255,255,0.12);border:1px solid rgba(255,255,255,0.3);border-bottom:none"></div><svg class="abs" style="left:12px;top:735px" width="26" height="9"><path d="M0 2.5L11 1V9H0Z M12.5 0.8L26 -0.5V9H12.5Z" fill="#fff"/></svg><div class="r" style="left:66px;top:733px;width:30px;height:11px;background:#0f8a1f"></div><svg class="abs" style="left:70px;top:734px" width="20" height="10"><path d="M4 10V4H16V10" fill="#fff"/><path d="M7 4Q10 -1 13 4" stroke="#fff" fill="none" stroke-width="1.5"/></svg><div class="r" style="left:128px;top:734px;width:19px;height:10px;background:#2b579a"></div><div class="r" style="left:143px;top:737px;width:16px;height:7px;background:#fff"></div><div class="r" style="left:145px;top:739px;width:12px;height:1px;background:#2b579a"></div><div class="r" style="left:145px;top:742px;width:12px;height:1px;background:#2b579a"></div><svg class="abs" style="left:190px;top:733px" width="30" height="11"><circle cx="15" cy="15" r="14" fill="#db4437"/><path d="M15 15L28 11A14 14 0 0 1 29 15Z" fill="#f4c20d"/><path d="M15 15L1 11A14 14 0 0 0 1 15Z" fill="#0f9d58"/><circle cx="15" cy="15" r="6" fill="#fff"/><circle cx="15" cy="15" r="4.5" fill="#4285f4"/></svg><svg class="abs" style="left:251px;top:732px" width="29" height="12"><path d="M2 12V2Q2 0 4 0H20L28 12Z" fill="#9cc8f0"/><path d="M10 12Q12 5 17 6Q13 8 14 12Z" fill="#fff"/></svg><svg class="abs" style="left:313px;top:732px" width="30" height="12"><path d="M2 12V2Q2 0 4 0H22L29 12Z" fill="#fff"/><text x="9" y="14" font-size="12" fill="#e03020" font-weight="bold">Я</text></svg><svg class="abs" style="left:376px;top:733px" width="30" height="11"><circle cx="15" cy="15" r="14" fill="#fff"/><path d="M1 6L13 14L29 2" stroke="#e01818" stroke-width="4" fill="none"/></svg><svg class="abs" style="left:438px;top:733px" width="29" height="11"><circle cx="14" cy="14" r="13" fill="#10aaf0"/><circle cx="5" cy="5" r="5" fill="#10aaf0"/><text x="9" y="15" font-size="12" fill="#fff" font-weight="bold">S</text></svg><svg class="abs" style="left:500px;top:734px" width="30" height="10"><circle cx="15" cy="15" r="14" fill="#a82018"/><circle cx="21" cy="10" r="5" fill="#e89090" opacity="0.6"/></svg><svg class="abs" style="left:563px;top:733px" width="29" height="11"><ellipse cx="14.5" cy="14" rx="14" ry="13" fill="#f59a20"/><path d="M4 8H25L23 12H6Z" fill="#fff"/></svg><svg class="abs" style="left:624px;top:732px" width="26" height="12"><rect x="1" y="0" width="18" height="10" fill="#c8ddf4" stroke="#3a78c8"/><rect x="7" y="4" width="18" height="8" fill="#e8f2fc" stroke="#3a78c8"/><circle cx="6" cy="11" r="3" fill="#e8a040"/></svg><svg class="abs" style="left:1155px;top:737px" width="12" height="7"><path d="M6 0L11 6H1Z" fill="none" stroke="#fff"/></svg><div class="r" style="left:1175px;top:738px;width:15px;height:6px;background:#eef4f8;border:1px solid #fff"></div><svg class="abs" style="left:1200px;top:736px" width="16" height="8"><path d="M1 8V1H4V8M6 8V2H14V8" fill="#f4f8fb"/></svg><div class="r" style="left:1236px;top:741px;width:4px;height:3px;background:#e8f0f8"></div><div class="t" style="left:1310px;top:737px;font-size:12px;color:#fff;">5:48</div>
</body></html>
